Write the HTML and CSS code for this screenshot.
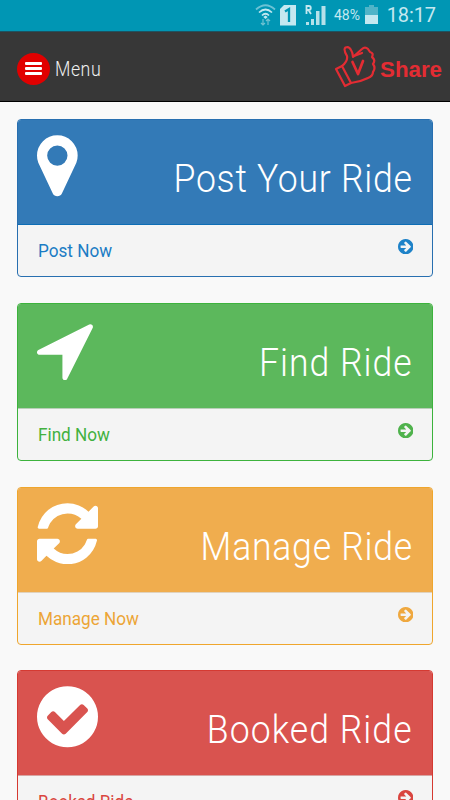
FILE: index.html
```html
<!DOCTYPE html>
<html lang="en">
<head>
<meta charset="utf-8">
<title>V Share</title>
<link rel="stylesheet" href="styles.css">
</head>
<body>
<div class="status">
  <svg class="status-icons" viewBox="0 0 78 30" width="78" height="30">
    <g fill="none" stroke="#c4e8f0" stroke-width="1.7">
      <path d="M1 8.500Q10.500 0 20 8.500" opacity=".55"/><path d="M4 11.500Q10.500 5.500 17 11.500"/><path d="M7 14.500Q10.500 11 14 14.500"/>
    </g>
    <path d="M8.300 16L10.500 18L12.700 16L10.500 14.500Z" fill="#c4e8f0"/>
    <path d="M8 18v6M6 22l2 2 2-2M13 24v-6M11 20l2-2 2 2" fill="none" stroke="#6fc2d2" stroke-width="1.200"/>
    <path d="M29 4H41V24.500H25V8Z" fill="#c4e8f0"/>
    <path d="M30 10.500L34 8V21" fill="none" stroke="#0096b4" stroke-width="2.300"/>
    <path d="M51 24v-3h3v3zM56 24v-6h3v6zM61 24V10h3.500v14zM66.500 24V5h4v19z" fill="#b5e1ea"/>
    <path d="M51.500 13V5h2.300q2 0 2 2t-2 2h-2.300M53.500 9l2.500 4" fill="none" stroke="#c4e8f0" stroke-width="1.800"/>
  </svg>
  <span class="battery-text">48%</span>
  <svg class="battery" viewBox="0 0 13 20" width="13" height="20">
    <path d="M4 0h5v2h4v8H0V2h4z" fill="#50b4c8"/><path d="M0 10h13v9H0z" fill="#c4e8f0"/>
  </svg>
  <span class="clock">18:17</span>
</div>
<header class="navbar">
  <div class="menu">
    <span class="menu-button"><i></i><i></i><i></i></span>
    <span class="menu-label">Menu</span>
  </div>
  <div class="brand">
    <svg viewBox="0 0 44 44" width="44" height="44" fill="none" stroke="#e32c33" stroke-width="2.200" stroke-linejoin="round" stroke-linecap="round">
      <path d="M2 24L8 21L17 38L11 41Z"/>
      <path d="M8 21Q14 16 13 11Q9 4 11.500 2.500Q15 1 17 5Q19 8 19 12L28 4Q31 1 34 4L36 7Q40 8 38 12Q42 15 39 19Q42 23 39 27Q39 31 34 33Q26 37 17 38"/>
      <path d="M20 11L28 8"/>
      <path d="M18.500 17L24 29L29 16" stroke-width="2.700"/>
    </svg>
    <span class="brand-name">Share</span>
  </div>
</header>
<main class="cards">
  <section class="card blue">
    <div class="card-head">
      <svg class="card-icon" viewBox="0 128 1536 1536"><path d="M768 640q0-106-75-181t-181-75-181 75-75 181 75 181 181 75 181-75 75-181zm256 0q0 109-33 179l-364 774q-16 33-47.500 52t-67.500 19-67.500-19-46.500-52l-365-774q-33-70-33-179 0-212 150-362t362-150 362 150 150 362z"/></svg>
      <h2 class="post-title">Post Your Ride</h2>
    </div>
    <div class="card-foot"><span class="card-link">Post Now</span><svg class="go" viewBox="128 128 1536 1536"><use href="#arrow"/></svg></div>
  </section>
  <section class="card green">
    <div class="card-head">
      <svg class="card-icon" viewBox="192 128 1536 1536"><path d="M1593 349l-640 1280q-17 35-57 35-5 0-15-2-22-5-35.500-22.500t-13.500-39.500v-576h-576q-22 0-39.500-13.500t-22.500-35.500 4-42 29-30l1280-640q13-7 29-7 27 0 45 19 15 14 18.500 34.500t-6.500 39.500z"/></svg>
      <h2 class="find-title">Find Ride</h2>
    </div>
    <div class="card-foot"><span class="card-link">Find Now</span><svg class="go" viewBox="128 128 1536 1536"><use href="#arrow"/></svg></div>
  </section>
  <section class="card orange">
    <div class="card-head">
      <svg class="card-icon" viewBox="128 128 1536 1536"><path d="M1639 1056q0 5-1 7-64 268-268 434.500t-478 166.500q-146 0-282.500-55t-243.500-157l-129 129q-19 19-45 19t-45-19-19-45v-448q0-26 19-45t45-19h448q26 0 45 19t19 45-19 45l-137 137q71 66 161 102t187 36q134 0 250-65t186-179q11-17 53-117 8-23 30-23h192q13 0 22.500 9.500t9.500 22.500zm25-800v448q0 26-19 45t-45 19h-448q-26 0-45-19t-19-45 19-45l138-138q-148-137-349-137-134 0-250 65t-186 179q-11 17-53 117-8 23-30 23h-199q-13 0-22.500-9.500t-9.500-22.500v-7q65-268 270-434.500t480-166.500q146 0 284 55.500t245 156.500l130-129q19-19 45-19t45 19 19 45z"/></svg>
      <h2 class="manage-title">Manage Ride</h2>
    </div>
    <div class="card-foot"><span class="card-link">Manage Now</span><svg class="go" viewBox="128 128 1536 1536"><use href="#arrow"/></svg></div>
  </section>
  <section class="card red">
    <div class="card-head">
      <svg class="card-icon" viewBox="128 128 1536 1536"><path d="M1412 734q0-28-18-46l-91-90q-19-19-45-19t-45 19l-408 407-226-226q-19-19-45-19t-45 19l-91 90q-18 18-18 46 0 27 18 45l362 362q19 19 45 19 27 0 46-19l543-543q18-18 18-45zm252 162q0 209-103 385.500t-279.500 279.500-385.500 103-385.500-103-279.500-279.500-103-385.500 103-385.500 279.500-279.500 385.500-103 385.500 103 279.500 279.500 103 385.500z"/></svg>
      <h2 class="booked-title">Booked Ride</h2>
    </div>
    <div class="card-foot"><span class="card-link">Booked Ride</span><svg class="go" viewBox="128 128 1536 1536"><use href="#arrow"/></svg></div>
  </section>
</main>
<svg width="0" height="0"><defs>
  <path id="arrow" d="M1413 896q0-27-18-45l-91-91-362-362q-18-18-45-18t-45 18l-91 91q-18 18-18 45t18 45l189 189h-502q-26 0-45 19t-19 45v128q0 26 19 45t45 19h502l-189 189q-19 19-19 45t19 45l91 91q18 18 45 18t45-18l362-362 91-91q18-18 18-45zm251 0q0 209-103 385.500t-279.500 279.500-385.500 103-385.500-103-279.500-279.500-103-385.500 103-385.500 279.500-279.500 385.500-103 385.500 103 279.500 279.500 103 385.500z"/>
</defs></svg>
</body>
</html>
```
FILE: styles.css
```css
* { box-sizing: border-box; }
html { height: 100%; overflow: hidden; }
body { margin: 0; height: 800px; overflow: hidden; background: #f9f9f9; font-family: Roboto, "Liberation Sans", sans-serif; }

.status { height: 31px; background: #0096b4; display: flex; align-items: center; padding-right: 14px; justify-content: flex-end; color: #c4e8f0; }
.status-icons { margin-right: 1px; }
.battery-text { font-size: 14px; width: 28px; margin-right: 3px; margin-top: -1px; }
.battery { margin-right: 8px; margin-top: -2px; }
.clock { font-size: 20px; width: 50px; text-align: right; letter-spacing: -.1px; margin-top: -2px; }

.navbar { height: 71px; background: #373737; border-top: 1px solid #1d5361; border-bottom: 1px solid #000; display: flex; justify-content: space-between; align-items: center; padding: 0 8px 0 17px; }
.menu { display: flex; align-items: center; gap: 5px; padding-top: 5px; }
.menu-button { width: 33px; height: 32px; border-radius: 50%; background: #e10000; display: flex; flex-direction: column; align-items: center; justify-content: center; gap: 2px; padding-bottom: 2px; }
.menu-button i { width: 17px; height: 3px; background: #fff; border-radius: 1px; }
.menu-label { color: #f0f0f0; font-size: 19.500px; font-weight: 300; letter-spacing: .6px; transform: scaleX(.91); transform-origin: left; }
.brand { display: flex; align-items: center; gap: 2px; }
.brand-name { color: #e32c33; font: bold 22.300px/24px "Liberation Sans", sans-serif; padding-top: 6px; }

.cards { padding: 17px 17px 0 17px; display: flex; flex-direction: column; gap: 25.800px; }
.card { height: 158px; border: 1px solid var(--line); border-radius: 4px; overflow: hidden; background: #f4f4f4; color: var(--ink); flex: none; }
.card-head { height: 104px; background: var(--fill); display: flex; justify-content: space-between; padding: 15px 20px 0 19px; color: #fff; }
.card-icon { width: 61px; height: 61.500px; fill: #fff; flex: none; }
.card h2 { margin: 0; font-weight: 300; font-size: 39.500px; line-height: 46px; padding-top: 21px; white-space: nowrap; transform: scaleX(.9); transform-origin: right; }
.card .post-title { letter-spacing: .82px; margin-right: -.8px; }
.card .find-title { letter-spacing: 1.100px; margin-right: -1px; }
.card .manage-title { letter-spacing: .86px; margin-right: -.8px; }
.card .booked-title { letter-spacing: 1.160px; margin-right: -1px; }
.card-foot { display: flex; justify-content: space-between; border-top: 1px solid var(--rule); padding: 14px 19px 0 20px; font-size: 18.500px; line-height: 24px; }
.card-link { transform: scaleX(.927); transform-origin: left; }
.go { width: 15.400px; height: 15.400px; fill: var(--go); flex: none; }

.blue { --fill: #337ab7; --line: #286fb0; --rule: #0d6db5; --ink: #1b7cc4; --go: #1e82c8; }
.green { --fill: #5cb85c; --line: #3db33d; --rule: #b9cfb9; --ink: #42b13f; --go: #4fb24c; }
.orange { --fill: #f0ad4e; --line: #efa62d; --rule: #e0d2bd; --ink: #eca536; --go: #efa83f; }
.red { --fill: #d9534f; --line: #d53a32; --rule: #d7a5a3; --ink: #da4640; --go: #d9453f; }
```
